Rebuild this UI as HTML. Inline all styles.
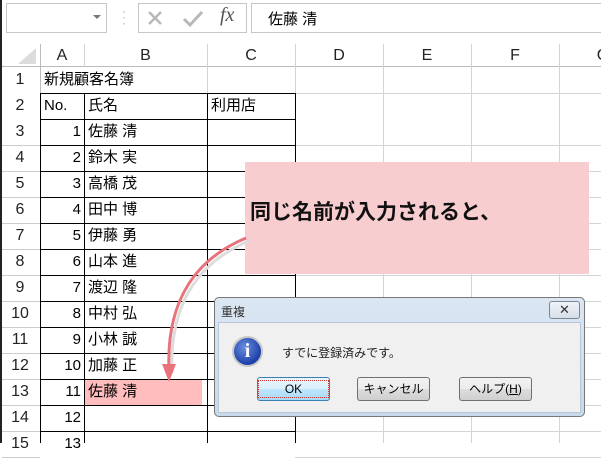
<!DOCTYPE html>
<html><head><meta charset="utf-8"><style>
*{margin:0;padding:0;box-sizing:border-box}
body{width:601px;height:443px;overflow:hidden;background:#fff;position:relative;font-family:"Liberation Sans","Noto Sans CJK JP",sans-serif}
.a{position:absolute}
.hl{position:absolute;background:#d4d4d4}
.t{position:absolute;font-size:15px;color:#000;line-height:26px}
.rh{position:absolute;left:0;width:40px;text-align:center;font-size:16px;color:#222;line-height:26px}
.ch{position:absolute;top:44px;height:23px;text-align:center;font-size:16px;color:#222;line-height:23px}
.btn{position:absolute;top:377px;width:73px;height:24px;border:1px solid #707070;border-radius:3px;background:linear-gradient(#f2f2f2,#ebebeb 50%,#dddddd 51%,#cfcfcf);font-size:12px;text-align:center;line-height:22px;color:#000}
</style></head><body>
<div class="a" style="left:6px;top:3px;width:101px;height:30px;border:1px solid #c6c6c6"></div>
<div class="a" style="left:93px;top:15px;width:0;height:0;border-left:4px solid transparent;border-right:4px solid transparent;border-top:4px solid #777"></div>
<div class="a" style="left:122px;top:8px;color:#aaa;font-size:12px;line-height:6px">·<br>·<br>·</div>
<div class="a" style="left:138px;top:3px;width:109px;height:30px;border:1px solid #c6c6c6"></div>
<svg class="a" style="left:138px;top:3px" width="109" height="30">
<path d="M11 9 L23 21 M23 9 L11 21" stroke="#b8b8b8" stroke-width="2.5" fill="none"/>
<path d="M46 16 L52 22 L64 9" stroke="#b8b8b8" stroke-width="3" fill="none"/>
</svg>
<div class="a" style="left:220px;top:4px;font-size:20px;color:#555;font-family:'Liberation Serif',serif;font-style:italic">fx</div>
<div class="a" style="left:251px;top:3px;width:360px;height:30px;border:1px solid #c6c6c6"></div>
<div class="a" style="left:268px;top:8px;font-size:15px">佐藤 清</div>
<div class="a" style="left:0;top:0;width:2px;height:443px;background:#222"></div>
<div class="a" style="left:2px;top:44px;width:599px;height:23px;background:#fff;border-bottom:1px solid #bbb"></div>
<div class="a" style="left:18px;top:48px;width:0;height:0;border-left:18px solid transparent;border-bottom:16px solid #dcdcdc"></div>
<div class="hl" style="left:40px;top:44px;width:1px;height:399px;background:#bbb"></div>
<div class="ch" style="left:40px;width:44px">A</div>
<div class="ch" style="left:84px;width:123px">B</div>
<div class="ch" style="left:207px;width:88px">C</div>
<div class="ch" style="left:295px;width:88px">D</div>
<div class="ch" style="left:383px;width:88px">E</div>
<div class="ch" style="left:471px;width:88px">F</div>
<div class="ch" style="left:559px;width:88px">G</div>
<div class="hl" style="left:84px;top:44px;width:1px;height:23px"></div>
<div class="hl" style="left:207px;top:44px;width:1px;height:50px"></div>
<div class="hl" style="left:295px;top:44px;width:1px;height:399px"></div>
<div class="hl" style="left:383px;top:44px;width:1px;height:399px"></div>
<div class="hl" style="left:471px;top:44px;width:1px;height:399px"></div>
<div class="hl" style="left:559px;top:44px;width:1px;height:399px"></div>
<div class="hl" style="left:40px;top:93px;width:561px;height:1px"></div>
<div class="a" style="left:84px;top:379px;width:118px;height:26px;background:#ffbdbd"></div>
<div id="g"></div>
<div class="rh" style="top:67px">1</div>
<div class="t" style="left:44px;top:67px">新規顧客名簿</div>
<div class="rh" style="top:93px">2</div><div class="t" style="left:44px;top:93px">No.</div><div class="t" style="left:88px;top:93px">氏名</div><div class="t" style="left:211px;top:93px">利用店</div>
<script>
var names=["佐藤 清","鈴木 実","高橋 茂","田中 博","伊藤 勇","山本 進","渡辺 隆","中村 弘","小林 誠","加藤 正","佐藤 清",""];
var h="";
for(var r=3;r<=15;r++){var y=67+(r-1)*26;
h+='<div class="rh" style="top:'+y+'px">'+r+'</div>';
h+='<div class="hl" style="left:2px;top:'+(y+26)+'px;width:38px;height:1px;background:#ccc"></div>';
h+='<div class="hl" style="left:295px;top:'+(y+26)+'px;width:306px;height:1px"></div>';
h+='<div class="t" style="left:40px;width:41px;text-align:right;top:'+y+'px">'+(r-2)+'</div>';
if(names[r-3])h+='<div class="t" style="left:88px;top:'+y+'px">'+names[r-3]+'</div>';
}
for(var r=2;r<=15;r++){var y=67+(r-1)*26;h+='<div class="hl" style="left:40px;top:'+y+'px;width:256px;height:1px;background:#000"></div>';}
h+='<div class="hl" style="left:40px;top:93px;width:1px;height:350px;background:#000"></div>';
h+='<div class="hl" style="left:84px;top:93px;width:1px;height:350px;background:#000"></div>';
h+='<div class="hl" style="left:207px;top:93px;width:1px;height:350px;background:#000"></div>';
h+='<div class="hl" style="left:295px;top:93px;width:1px;height:350px;background:#000"></div>';
document.getElementById("g").innerHTML=h;
</script>
<div class="a" style="left:245px;top:162px;width:344px;height:112px;background:#f8cdd0"></div>
<div class="a" style="left:250px;top:196px;font-size:21px;font-weight:bold;color:#111">同じ名前が入力されると、</div>
<svg class="a" style="left:0;top:0" width="601" height="443">
<path d="M246 238 C198 258 166 298 169 370" stroke="#ddd" stroke-width="3" fill="none" transform="translate(3,3)"/>
<path d="M246 238 C198 258 166 298 169 370" stroke="#e9737a" stroke-width="3" fill="none"/>
<path d="M162 364 L176 364 L169 382 Z" fill="#e9737a"/>
</svg>
<div class="a" style="left:214px;top:297px;width:371px;height:120px;border:1px solid #777;border-radius:5px;background:linear-gradient(#dbe6f2,#c8d9ec);"></div>
<div class="a" style="left:221px;top:303px;font-size:12px;color:#333">重複</div>
<div class="a" style="left:549px;top:301px;width:31px;height:18px;border:1px solid #7a8796;border-radius:3px;background:linear-gradient(#f0f4f9,#d6dee8);text-align:center;font-size:13px;line-height:16px;color:#333">✕</div>
<div class="a" style="left:218px;top:322px;width:363px;height:91px;background:#f0f0f0;border:1px solid #b8c6d6"></div>
<div class="a" style="left:232px;top:336px;width:31px;height:31px;border-radius:50%;background:radial-gradient(circle at 40% 35%,#6b8fe0,#1d3fa8 70%);border:2px solid #c9c9c9;color:#fff;font-weight:bold;font-size:20px;text-align:center;line-height:27px;font-family:'Liberation Serif',serif">i</div>
<div class="a" style="left:282px;top:344px;font-size:12px;color:#222">すでに登録済みです。</div>
<div class="btn" style="left:257px;border-color:#3c7fb1;background:linear-gradient(#eaf6fd,#d9f0fc 50%,#bee6fd 51%,#a7d9f5)"><span style="outline:1px dotted #c33;outline-offset:1px;padding:0 25px">OK</span></div>
<div class="btn" style="left:357px">キャンセル</div>
<div class="btn" style="left:459px">ヘルプ(<u>H</u>)</div>
</body></html>
